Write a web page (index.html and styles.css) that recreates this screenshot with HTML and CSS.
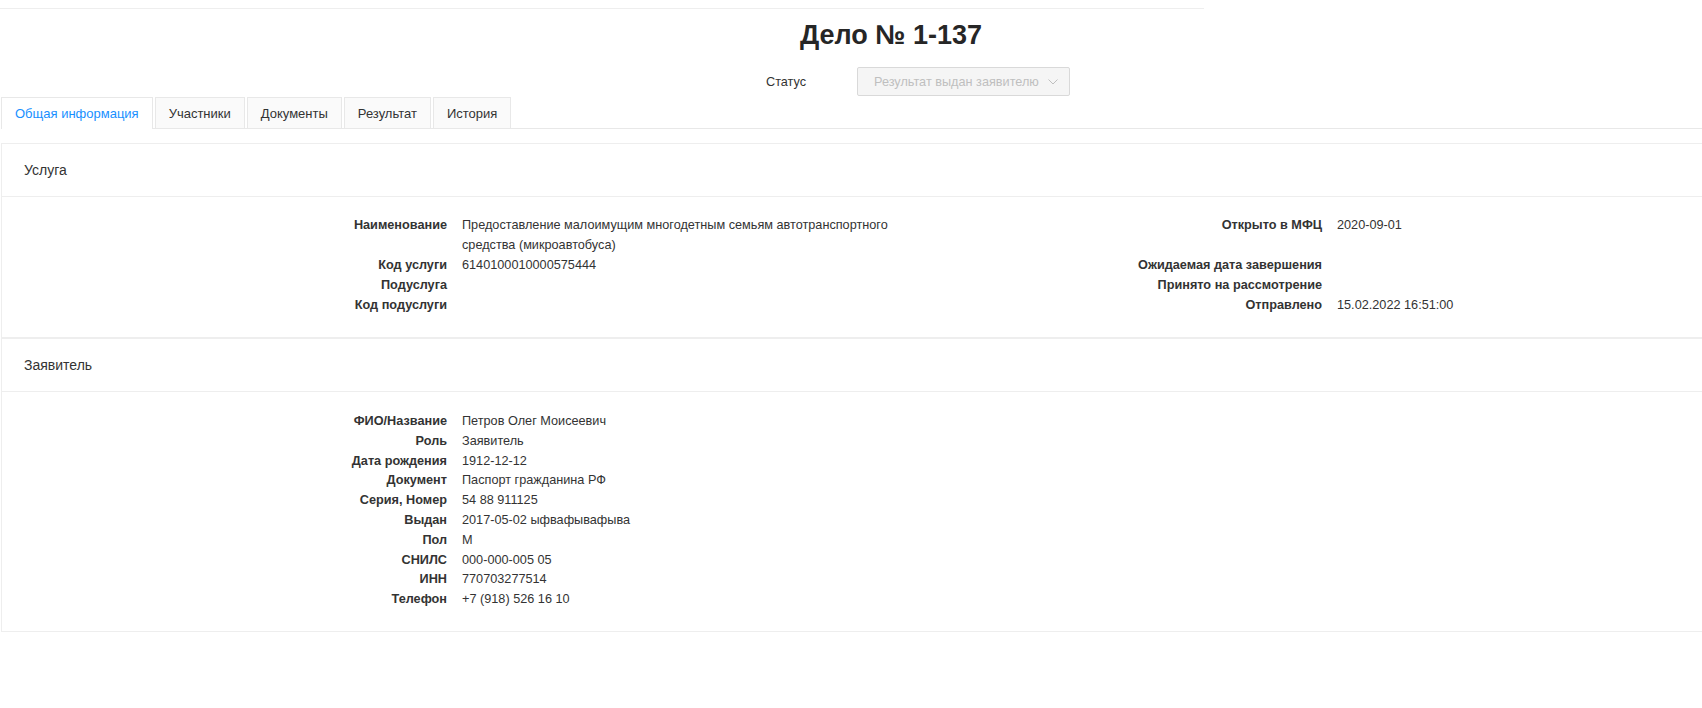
FILE: index.html
```html
<!DOCTYPE html>
<html lang="ru">
<head>
    <meta charset="UTF-8">
    <meta name="viewport" content="width=device-width, initial-scale=1.0">
    <title>Дело № 1-137</title>
    <link rel="stylesheet" href="styles.css">
</head>
<body>

    <div class="top-line"></div>

    <header class="case-head">
        <h1>Дело № 1-137</h1>
        <div class="status-row">
            <span class="status-label">Статус</span>
            <div class="status-select">
                <span>Результат выдан заявителю</span>
                <svg width="10" height="6" viewBox="0 0 10 6"><polyline points="0.5,0.5 5,5 9.5,0.5" fill="none" stroke="#bfbfbf" stroke-width="1"/></svg>
            </div>
        </div>
    </header>

    <div class="page">
        <nav class="tabs">
            <a class="tab active">Общая информация</a>
            <a class="tab">Участники</a>
            <a class="tab">Документы</a>
            <a class="tab">Результат</a>
            <a class="tab">История</a>
        </nav>

        <section class="panel">
            <div class="panel-title">Услуга</div>
            <div class="panel-body">
                <div class="service-grid">
                    <div class="lbl">Наименование</div>
                    <div class="val">Предоставление малоимущим многодетным семьям автотранспортного средства (микроавтобуса)</div>
                    <div class="lbl">Открыто в МФЦ</div>
                    <div class="val">2020-09-01</div>

                    <div class="lbl">Код услуги</div>
                    <div class="val">6140100010000575444</div>
                    <div class="lbl">Ожидаемая дата завершения</div>
                    <div class="val"></div>

                    <div class="lbl">Подуслуга</div>
                    <div class="val"></div>
                    <div class="lbl">Принято на рассмотрение</div>
                    <div class="val"></div>

                    <div class="lbl">Код подуслуги</div>
                    <div class="val"></div>
                    <div class="lbl">Отправлено</div>
                    <div class="val">15.02.2022 16:51:00</div>
                </div>
            </div>
        </section>

        <section class="panel">
            <div class="panel-title">Заявитель</div>
            <div class="panel-body applicant">
                <dl class="info-list">
                    <dt>ФИО/Название</dt><dd>Петров Олег Моисеевич</dd>
                    <dt>Роль</dt><dd>Заявитель</dd>
                    <dt>Дата рождения</dt><dd>1912-12-12</dd>
                    <dt>Документ</dt><dd>Паспорт гражданина РФ</dd>
                    <dt>Серия, Номер</dt><dd>54 88 911125</dd>
                    <dt>Выдан</dt><dd>2017-05-02 ыфвафывафыва</dd>
                    <dt>Пол</dt><dd>М</dd>
                    <dt>СНИЛС</dt><dd>000-000-005 05</dd>
                    <dt>ИНН</dt><dd>770703277514</dd>
                    <dt>Телефон</dt><dd>+7 (918) 526 16 10</dd>
                </dl>
            </div>
        </section>
    </div>

</body>
</html>
```

FILE: styles.css
```css
/* General styles */
body {
    margin: 0;
    font-family: "Liberation Sans", Arial, sans-serif;
    font-size: 13px;
    color: #333;
    background: #fff;
}

.top-line {
    width: 1204px;
    margin-top: 8px;
    border-top: 1px solid #eee;
}

/* Case header */
.case-head {
    padding-left: 80px;
}

.case-head h1 {
    margin: 10px 0 0;
    font-size: 27px;
    line-height: 32px;
    text-align: center;
    color: #262626;
}

.status-row {
    display: flex;
    align-items: center;
    margin: 16px 0 1px;
    padding-left: 686px;
    font-size: 12.7px;
}

.status-label {
    width: 91px;
}

.status-select {
    width: 213px;
    height: 29px;
    box-sizing: border-box;
    display: flex;
    align-items: center;
    justify-content: space-between;
    padding: 0 11px 0 16px;
    background: #f5f5f5;
    border: 1px solid #d9d9d9;
    border-radius: 2px;
    color: #bfbfbf;
}

/* Tabs */
.page {
    padding-left: 1px;
}

.tabs {
    display: flex;
    border-bottom: 1px solid #e8e8e8;
}

.tab {
    height: 31px;
    box-sizing: border-box;
    display: flex;
    align-items: center;
    padding: 0 13px;
    margin-right: 2px;
    background: #fafafa;
    border: 1px solid #e8e8e8;
    border-bottom: 0;
    color: #333;
    cursor: pointer;
}

.tab.active {
    height: 32px;
    margin-bottom: -1px;
    background: #fff;
    color: #1890ff;
}

/* Panels */
.panel:first-of-type {
    margin-top: 14px;
}

.panel {
    border: 1px solid #eee;
    border-right: 0;
}

.panel-title {
    padding: 16px 22px;
    font-size: 14px;
    line-height: 20px;
    border-bottom: 1px solid #eee;
}

.panel-body {
    padding: 18px 0 22px;
    font-size: 12.7px;
}

.panel-body.applicant {
    padding: 20px 0 21px;
}

.service-grid {
    display: grid;
    grid-template-columns: 445px 450px 395px 1fr;
    column-gap: 15px;
    line-height: 20px;
}

.lbl {
    text-align: right;
    font-weight: bold;
}

.info-list {
    display: grid;
    grid-template-columns: 445px 1fr;
    column-gap: 15px;
    margin: 0;
    line-height: 19.8px;
}

.info-list dt {
    text-align: right;
    font-weight: bold;
}

.info-list dd {
    margin: 0;
}
```
